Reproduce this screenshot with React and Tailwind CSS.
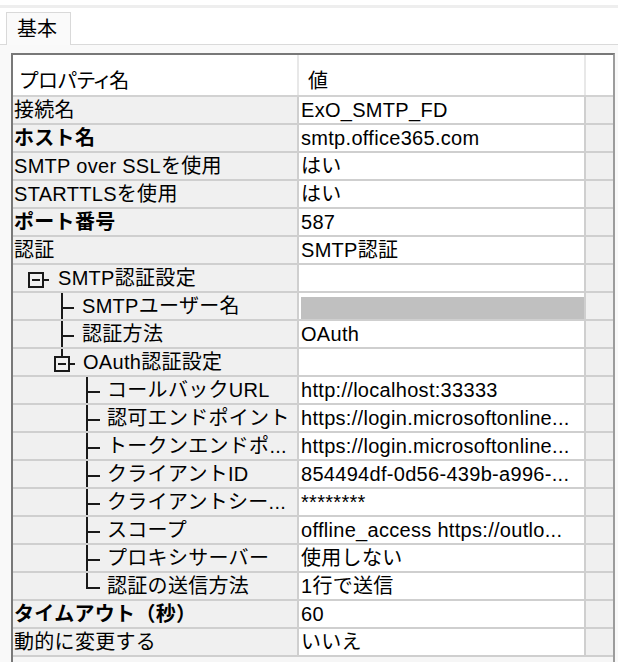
import React from 'react';

const rows = [
  { name: '接続名', value: 'ExO_SMTP_FD' },
  { name: 'ホスト名', value: 'smtp.office365.com', bold: true },
  { name: 'SMTP over SSLを使用', value: 'はい' },
  { name: 'STARTTLSを使用', value: 'はい' },
  { name: 'ポート番号', value: '587', bold: true },
  { name: '認証', value: 'SMTP認証' },
  { name: 'SMTP認証設定', tree: 'box1' },
  { name: 'SMTPユーザー名', tree: 'tee1', masked: true },
  { name: '認証方法', value: 'OAuth', tree: 'tee1' },
  { name: 'OAuth認証設定', tree: 'box2' },
  { name: 'コールバックURL', value: 'http://localhost:33333', tree: 'tee2' },
  { name: '認可エンドポイント', value: 'https://login.microsoftonline...', tree: 'tee2' },
  { name: 'トークンエンドポ...', value: 'https://login.microsoftonline...', tree: 'tee2' },
  { name: 'クライアントID', value: '854494df-0d56-439b-a996-...', tree: 'tee2' },
  { name: 'クライアントシー...', value: '********', tree: 'tee2' },
  { name: 'スコープ', value: 'offline_access https://outlo...', tree: 'tee2' },
  { name: 'プロキシサーバー', value: '使用しない', tree: 'tee2' },
  { name: '認証の送信方法', value: '1行で送信', tree: 'end2' },
  { name: 'タイムアウト（秒）', value: '60', bold: true },
  { name: '動的に変更する', value: 'いいえ' },
];

const indent = {
  box1: 'pl-[45px]',
  tee1: 'pl-[69px]',
  box2: 'pl-[70px]',
  tee2: 'pl-[94px]',
  end2: 'pl-[94px]',
};

// tree connectors, drawn over the row (28px incl. the row line)
const TreeLines = ({ kind }) => {
  const s = { stroke: '#1a1a1a', strokeWidth: 2, fill: 'none' };
  return (
    <svg className="absolute left-0 top-0" width="100" height="28" shapeRendering="crispEdges">
      {kind === 'box1' && (
        <>
          <rect x="16" y="8" width="14" height="14" {...s} />
          <line x1="19" y1="15" x2="27" y2="15" {...s} />
          <line x1="31" y1="15" x2="36" y2="15" {...s} />
        </>
      )}
      {kind === 'tee1' && (
        <>
          <line x1="49" y1="0" x2="49" y2="28" {...s} />
          <line x1="49" y1="15" x2="61" y2="15" {...s} />
        </>
      )}
      {kind === 'box2' && (
        <>
          <line x1="49" y1="0" x2="49" y2="8" {...s} />
          <rect x="42" y="8" width="14" height="14" {...s} />
          <line x1="45" y1="15" x2="53" y2="15" {...s} />
          <line x1="57" y1="15" x2="62" y2="15" {...s} />
        </>
      )}
      {kind === 'tee2' && (
        <>
          <line x1="74" y1="0" x2="74" y2="28" {...s} />
          <line x1="74" y1="15" x2="87" y2="15" {...s} />
        </>
      )}
      {kind === 'end2' && (
        <>
          <line x1="74" y1="0" x2="74" y2="16" {...s} />
          <line x1="74" y1="15" x2="87" y2="15" {...s} />
        </>
      )}
    </svg>
  );
};

const Row = ({ row }) => (
  <div className="flex h-[28px] border-b-2 border-[#cfcfcf]">
    <div
      className={`relative w-[286px] shrink-0 overflow-hidden whitespace-nowrap border-r-2 border-[#cfcfcf] bg-[#f0f0f0] leading-[26px] tracking-[0.3px] ${
        row.tree ? indent[row.tree] : 'pl-[1px]'
      } ${row.bold ? 'font-bold' : ''}`}
    >
      {row.tree && <TreeLines kind={row.tree} />}
      {row.name}
    </div>
    <div className="w-[287px] shrink-0 overflow-hidden whitespace-nowrap border-r-2 border-[#cfcfcf] bg-white pl-[2px] leading-[26px] tracking-[0.3px]">
      {row.masked ? <div className="mt-[4px] h-[22px] bg-[#c0c0c0]" /> : row.value}
    </div>
    <div className="flex-1 bg-[#f0f0f0]" />
  </div>
);

const App = () => {
  return (
    <div
      className="h-[662px] w-[618px] overflow-hidden bg-[#f9f9f9] text-[20px] text-black"
      style={{ fontFamily: '"Liberation Sans", "Noto Sans CJK JP", sans-serif' }}
    >
      <div className="h-[5px] bg-white" />
      <div className="h-[3px] bg-[#eeeeee]" />

      {/* tab strip */}
      <div className="flex h-[37px] items-end border-b border-[#dadada] bg-white pl-[6px]">
        <div className="-mb-px flex h-[33px] w-[65px] items-center border border-b-0 border-[#d9d9d9] bg-[#fafafa] pl-[10px] leading-[26px]">
          基本
        </div>
      </div>

      {/* property grid */}
      <div className="ml-[11px] mt-[8px] h-[610px] w-[604px] border-l-2 border-r-2 border-t-2 border-l-[#787878] border-r-[#9c9c9c] border-t-[#787878] bg-[#f6f6f6]">
        <div className="flex h-[42px] border-b-2 border-[#d2d2d2] bg-white">
          <div className="w-[286px] shrink-0 border-r-2 border-[#e8e8e8] pl-[7px] pt-[13px] leading-[26px] [font-feature-settings:'palt']">
            プロパティ名
          </div>
          <div className="w-[287px] shrink-0 border-r-2 border-[#e8e8e8] pl-[9px] pt-[13px] leading-[26px]">
            値
          </div>
          <div className="flex-1" />
        </div>
        {rows.map((row, i) => (
          <Row key={i} row={row} />
        ))}
      </div>
    </div>
  );
};

export default App;
